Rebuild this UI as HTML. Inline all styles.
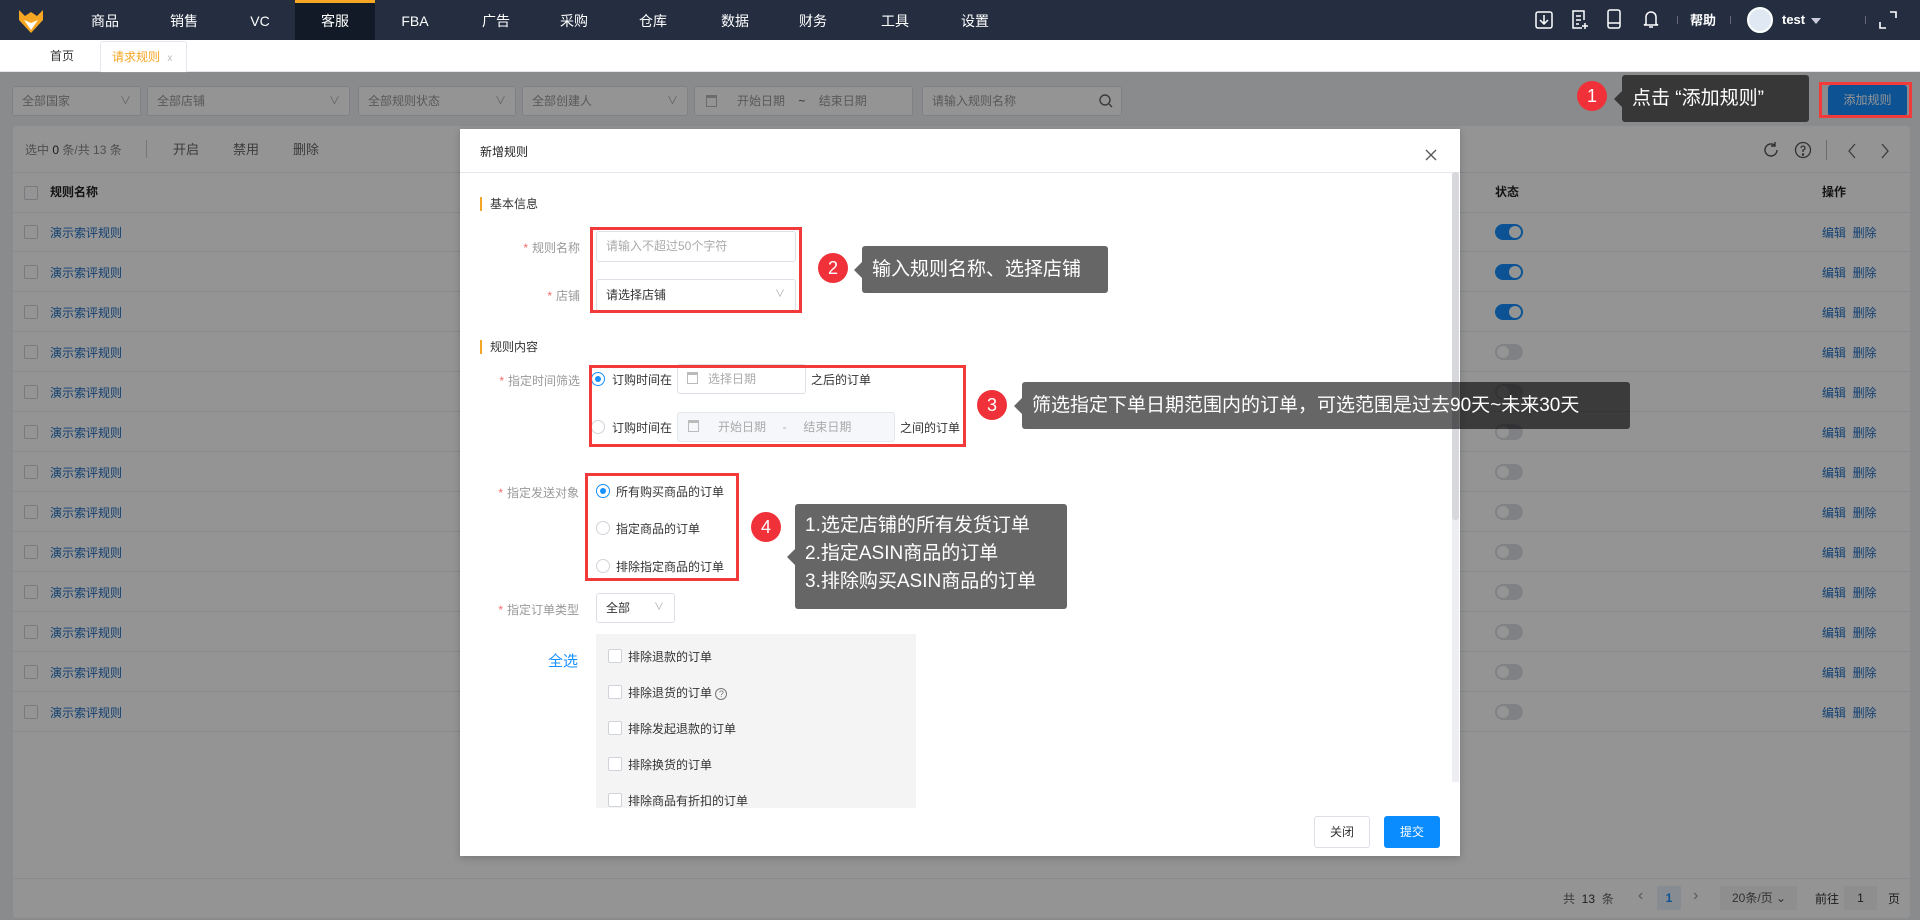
<!DOCTYPE html>
<html><head><meta charset="utf-8">
<style>
*{box-sizing:border-box;margin:0;padding:0}
body{width:1920px;height:920px;overflow:hidden;position:relative;background:#eef0f3;font-family:"Liberation Sans","Noto Sans CJK SC",sans-serif;font-size:12px;color:#333}
.a{position:absolute}
.nav{left:0;top:0;width:1920px;height:40px;background:#242e40}
.nav .m{top:0;height:40px;line-height:42px;color:#fff;font-size:14px;text-align:center;width:80px}
.tabs{left:0;top:40px;width:1920px;height:32px;background:#fff;border-bottom:1px solid #e4e7ed}
.sel{height:30px;top:86px;border:1px solid #dcdfe6;border-radius:3px;background:#fff;color:#999;line-height:28px;padding-left:9px}
.sel .ar{position:absolute;right:9px;top:0;color:#aaa;font-size:11px}
.card{left:13px;top:126px;width:1897px;height:792px;background:#fff;border-radius:4px}
.row{left:13px;width:1897px;height:40px;border-bottom:1px solid #ebeef5}
.cb{width:14px;height:14px;border:1px solid #d0d3d9;border-radius:2px;background:#fff}
.name{color:#1f6fc5}
.tg{width:28px;height:16px;border-radius:8px}
.tg i{position:absolute;top:2px;width:12px;height:12px;border-radius:50%;background:#fff}
.ov{left:0;top:72px;width:1920px;height:848px;background:rgba(0,0,0,.42)}
.modal{left:460px;top:129px;width:1000px;height:727px;background:#fff;box-shadow:0 2px 8px rgba(0,0,0,.2)}
.lbl{color:#999;text-align:right;width:120px;white-space:nowrap}
.lbl b{color:#f56c6c;font-weight:normal;margin-right:4px}
.inp{border:1px solid #dcdfe6;border-radius:3px;background:#fff}
.red{border:3px solid #f23a3a}
.circ{width:30px;height:30px;border-radius:50%;background:#f0313a;color:#fff;font-size:18px;line-height:30px;text-align:center}
.tip{background:rgba(0,0,0,.6);color:#fff;font-size:19px;border-radius:3px;padding:0 10px;white-space:nowrap}
.tip:before{content:"";position:absolute;left:-8px;top:50%;margin-top:-8px;border:8px solid transparent;border-left:0;border-right-color:rgba(0,0,0,.6)}
.rd{width:14px;height:14px;border-radius:50%;border:1px solid #d0d3d9;background:#fff}
.rd.on{border-color:#1890ff}
.rd.on:after{content:"";position:absolute;left:3px;top:3px;width:6px;height:6px;border-radius:50%;background:#1890ff}
.cal{width:11px;height:12px;border:1px solid #bbb;border-top-width:3px}
</style></head><body>

<div class="a nav">
  <svg class="a" style="left:18px;top:8px" width="26" height="26" viewBox="0 0 26 26"><path d="M1 2 L7 8 L13 4 L19 8 L25 2 L25 12 L13 25 L1 12 Z" fill="#f5a623"/><path d="M6 12 L13 22 L20 12 L13 15 Z" fill="#fff"/></svg>
  <div class="a m" style="left:65px">商品</div>
  <div class="a m" style="left:144px">销售</div>
  <div class="a m" style="left:220px">VC</div>
  <div class="a m" style="left:295px;background:#111a26;border-top:3px solid #f5a623;line-height:36px">客服</div>
  <div class="a m" style="left:375px">FBA</div>
  <div class="a m" style="left:456px">广告</div>
  <div class="a m" style="left:534px">采购</div>
  <div class="a m" style="left:613px">仓库</div>
  <div class="a m" style="left:695px">数据</div>
  <div class="a m" style="left:773px">财务</div>
  <div class="a m" style="left:855px">工具</div>
  <div class="a m" style="left:935px">设置</div>
  <svg class="a" style="left:1535px;top:11px" width="18" height="18" viewBox="0 0 18 18" fill="none" stroke="#fff" stroke-width="1.5"><rect x="1" y="1" width="16" height="16" rx="2"/><path d="M9 4v9M5 9l4 4 4-4"/></svg>
  <svg class="a" style="left:1571px;top:10px" width="18" height="20" viewBox="0 0 18 20" fill="none" stroke="#fff" stroke-width="1.5"><path d="M13 10V1H2v17h9"/><path d="M5 6h5M5 10h5M5 14h3M14 13v6M11 16h6"/></svg>
  <svg class="a" style="left:1607px;top:9px" width="14" height="20" viewBox="0 0 14 20" fill="none" stroke="#fff" stroke-width="1.5"><rect x="1" y="1" width="12" height="18" rx="2"/><path d="M1 14h12"/></svg>
  <svg class="a" style="left:1643px;top:9px" width="16" height="20" viewBox="0 0 16 20" fill="none" stroke="#fff" stroke-width="1.5"><path d="M3 15V8a5 5 0 0 1 10 0v7l2 1H1z"/><path d="M6 18h4"/></svg>
  <div class="a" style="left:1677px;top:16px;width:1px;height:8px;background:#667"></div>
  <div class="a" style="left:1690px;top:0;line-height:42px;color:#fff;font-size:13px;font-weight:bold">帮助</div>
  <div class="a" style="left:1730px;top:16px;width:1px;height:8px;background:#667"></div>
  <div class="a" style="left:1747px;top:7px;width:26px;height:26px;border-radius:50%;background:#dfe8f3;border:2px solid #fff"></div>
  <div class="a" style="left:1782px;top:0;line-height:40px;color:#fff;font-size:13px;font-weight:bold">test</div>
  <div class="a" style="left:1811px;top:18px;border:5px solid transparent;border-top:6px solid #ccd;border-bottom:0"></div>
  <div class="a" style="left:1865px;top:16px;width:1px;height:8px;background:#667"></div>
  <svg class="a" style="left:1879px;top:11px" width="18" height="18" viewBox="0 0 18 18" fill="none" stroke="#fff" stroke-width="1.6"><path d="M11 1h6v6M1 11v6h6"/></svg>
</div>

<div class="a tabs">
  <div class="a" style="left:50px;top:0;line-height:32px;font-size:12px;color:#333">首页</div>
  <div class="a" style="left:100px;top:1px;width:87px;height:32px;border:1px solid #e4e7ed;border-bottom:1px solid #fff;border-radius:3px 3px 0 0;background:#fff;line-height:30px;padding-left:11px;color:#f5a623">请求规则 <span style="color:#bbb;font-size:10px;margin-left:4px">x</span></div>
</div>

<div class="a sel" style="left:12px;width:129px">全部国家<span class="ar">∨</span></div>
<div class="a sel" style="left:147px;width:203px">全部店铺<span class="ar">∨</span></div>
<div class="a sel" style="left:358px;width:158px">全部规则状态<span class="ar">∨</span></div>
<div class="a sel" style="left:522px;width:166px">全部创建人<span class="ar">∨</span></div>
<div class="a sel" style="left:694px;width:219px;padding-left:42px">开始日期 <span style="color:#555;margin:0 10px">~</span> 结束日期</div>
<div class="a cal" style="left:706px;top:95px"></div>
<div class="a sel" style="left:922px;width:200px">请输入规则名称
  <svg class="a" style="right:8px;top:7px" width="14" height="14" viewBox="0 0 14 14" fill="none" stroke="#666" stroke-width="1.4"><circle cx="6" cy="6" r="5"/><path d="M10 10l3 3"/></svg></div>
<div class="a" style="left:1828px;top:85px;width:79px;height:31px;background:#1890ff;border-radius:3px;color:#fff;line-height:31px;text-align:center">添加规则</div>

<div class="a card"></div>
<div class="a" style="left:25px;top:140px;line-height:20px;color:#888">选中 <span style="color:#333">0</span> 条/共 13 条</div>
<div class="a" style="left:146px;top:140px;width:1px;height:18px;background:#ccc"></div>
<div class="a" style="left:173px;top:140px;line-height:20px;color:#666;font-size:13px">开启</div>
<div class="a" style="left:233px;top:140px;line-height:20px;color:#666;font-size:13px">禁用</div>
<div class="a" style="left:293px;top:140px;line-height:20px;color:#666;font-size:13px">删除</div>
<svg class="a" style="left:1762px;top:141px" width="18" height="18" viewBox="0 0 18 18" fill="none" stroke="#555" stroke-width="1.4"><path d="M15 9a6 6 0 1 1-2-4.5M13 1v4h-4"/></svg>
<svg class="a" style="left:1794px;top:141px" width="18" height="18" viewBox="0 0 18 18" fill="none" stroke="#555" stroke-width="1.3"><circle cx="9" cy="9" r="7.5"/><path d="M7 7a2 2 0 1 1 2 2v2"/><circle cx="9" cy="13.5" r=".6" fill="#555"/></svg>
<div class="a" style="left:1826px;top:140px;width:1px;height:20px;background:#bbb"></div>
<svg class="a" style="left:1847px;top:143px" width="10" height="16" viewBox="0 0 10 16" fill="none" stroke="#666" stroke-width="1.3"><path d="M8 1L2 8l6 7"/></svg>
<svg class="a" style="left:1880px;top:143px" width="10" height="16" viewBox="0 0 10 16" fill="none" stroke="#666" stroke-width="1.3"><path d="M2 1l6 7-6 7"/></svg>
<div class="a row" style="top:172px;border-top:1px solid #ebeef5;height:41px"></div>
<div class="a cb" style="left:24px;top:186px"></div>
<div class="a" style="left:50px;top:183px;font-weight:bold;color:#222">规则名称</div>
<div class="a" style="left:1495px;top:183px;font-weight:bold;color:#222">状态</div>
<div class="a" style="left:1822px;top:183px;font-weight:bold;color:#222">操作</div>

<div id="rows"></div>
<script>
var h='';for(var i=0;i<13;i++){var t=212+i*40;var on=i<3;
h+='<div class="a row" style="top:'+t+'px"></div><div class="a cb" style="left:24px;top:'+(t+13)+'px"></div><div class="a name" style="left:50px;top:'+(t+12)+'px">演示索评规则</div>'+
'<div class="a tg" style="left:1495px;top:'+(t+12)+'px;background:'+(on?'#1890ff':'#dcdfe6')+'"><i style="left:'+(on?14:2)+'px"></i></div>'+
'<div class="a name" style="left:1822px;top:'+(t+12)+'px">编辑&nbsp;&nbsp;删除</div>';}
document.getElementById('rows').outerHTML=h;
</script>
<div class="a" style="left:13px;top:878px;width:1897px;height:1px;background:#ebeef5"></div>
<div class="a" style="left:1563px;top:890px;line-height:18px;color:#666">共 <span style="color:#333">&nbsp;13&nbsp;</span> 条</div>
<div class="a" style="left:1638px;top:887px;color:#999;font-size:16px">‹</div>
<div class="a" style="left:1657px;top:886px;width:24px;height:24px;background:#e8f2fd;color:#1890ff;text-align:center;line-height:24px;font-weight:bold">1</div>
<div class="a" style="left:1693px;top:887px;color:#999;font-size:16px">›</div>
<div class="a" style="left:1720px;top:886px;width:77px;height:24px;background:#f4f4f5;line-height:24px;padding-left:12px;color:#555">20条/页 ⌄</div>
<div class="a" style="left:1815px;top:890px;color:#333">前往</div>
<div class="a" style="left:1844px;top:886px;width:33px;height:24px;background:#f4f4f5;line-height:24px;text-align:center">1</div>
<div class="a" style="left:1888px;top:890px;color:#333">页</div>

<div class="a ov"></div>

<div class="a" style="left:1819px;top:82px;width:93px;height:36px;border:3px solid #f23a3a"></div>
<div class="a circ" style="left:1577px;top:81px">1</div>
<div class="a tip" style="left:1622px;top:75px;width:187px;height:47px;line-height:47px">点击 “添加规则”</div>

<div class="a modal">
  <div class="a" style="left:20px;top:14px;font-size:12px;color:#222">新增规则</div>
  <svg class="a" style="left:965px;top:20px" width="12" height="12" viewBox="0 0 12 12" stroke="#555" stroke-width="1.3"><path d="M1 1l10 10M11 1L1 11"/></svg>
  <div class="a" style="left:0;top:43px;width:1000px;height:1px;background:#e4e7ed"></div>
  <div class="a" style="left:992px;top:43px;width:7px;height:610px;background:#eceef2"></div>
  <div class="a" style="left:992px;top:43px;width:7px;height:348px;background:#d6d8dc;border-radius:3px"></div>

  <div class="a" style="left:20px;top:68px;width:2px;height:14px;background:#f5a623"></div>
  <div class="a" style="left:30px;top:66px;font-size:12px;color:#333">基本信息</div>
  <div class="a lbl" style="left:0;top:110px"><b>*</b>规则名称</div>
  <div class="a inp" style="left:136px;top:102px;width:200px;height:31px;padding-left:9px;line-height:29px;color:#aaa">请输入不超过50个字符</div>
  <div class="a lbl" style="left:0;top:158px"><b>*</b>店铺</div>
  <div class="a inp" style="left:136px;top:150px;width:200px;height:32px;padding-left:9px;line-height:30px;color:#333">请选择店铺<span class="a" style="right:10px;top:0;color:#aaa;font-size:10px">∨</span></div>

  <div class="a" style="left:20px;top:211px;width:2px;height:14px;background:#f5a623"></div>
  <div class="a" style="left:30px;top:209px;font-size:12px;color:#333">规则内容</div>
  <div class="a lbl" style="left:0;top:243px"><b>*</b>指定时间筛选</div>
  <div class="a rd on" style="left:131px;top:243px"></div>
  <div class="a" style="left:152px;top:242px">订购时间在</div>
  <div class="a inp" style="left:217px;top:235px;width:129px;height:30px;padding-left:30px;line-height:28px;color:#aaa">选择日期</div>
  <div class="a cal" style="left:227px;top:243px"></div>
  <div class="a" style="left:351px;top:242px">之后的订单</div>
  <div class="a rd" style="left:131px;top:291px"></div>
  <div class="a" style="left:152px;top:290px">订购时间在</div>
  <div class="a inp" style="left:217px;top:283px;width:218px;height:30px;padding-left:40px;line-height:28px;color:#aaa;background:#f5f7fa;border-color:#e4e7ed">开始日期 &nbsp;&nbsp;&nbsp; - &nbsp;&nbsp;&nbsp; 结束日期</div>
  <div class="a cal" style="left:228px;top:291px"></div>
  <div class="a" style="left:440px;top:290px">之间的订单</div>

  <div class="a lbl" style="left:-1px;top:355px"><b>*</b>指定发送对象</div>
  <div class="a rd on" style="left:136px;top:355px"></div>
  <div class="a" style="left:156px;top:354px">所有购买商品的订单</div>
  <div class="a rd" style="left:136px;top:392px"></div>
  <div class="a" style="left:156px;top:391px">指定商品的订单</div>
  <div class="a rd" style="left:136px;top:430px"></div>
  <div class="a" style="left:156px;top:429px">排除指定商品的订单</div>

  <div class="a lbl" style="left:-1px;top:472px"><b>*</b>指定订单类型</div>
  <div class="a inp" style="left:136px;top:464px;width:79px;height:30px;padding-left:9px;line-height:28px">全部<span class="a" style="right:10px;top:0;color:#aaa;font-size:10px">∨</span></div>

  <div class="a" style="left:136px;top:505px;width:320px;height:174px;background:#f4f4f5;overflow:hidden">
    <div class="a cb" style="left:12px;top:15px"></div><div class="a" style="left:32px;top:14px">排除退款的订单</div>
    <div class="a cb" style="left:12px;top:51px"></div><div class="a" style="left:32px;top:50px">排除退货的订单 <span style="display:inline-block;width:12px;height:12px;border:1px solid #777;border-radius:50%;font-size:9px;line-height:10px;text-align:center;color:#777">?</span></div>
    <div class="a cb" style="left:12px;top:87px"></div><div class="a" style="left:32px;top:86px">排除发起退款的订单</div>
    <div class="a cb" style="left:12px;top:123px"></div><div class="a" style="left:32px;top:122px">排除换货的订单</div>
    <div class="a cb" style="left:12px;top:159px"></div><div class="a" style="left:32px;top:158px">排除商品有折扣的订单</div>
  </div>
  <div class="a" style="left:88px;top:521px;font-size:15px;color:#1890ff">全选</div>

  <div class="a" style="left:854px;top:687px;width:56px;height:32px;border:1px solid #dcdfe6;border-radius:3px;text-align:center;line-height:30px">关闭</div>
  <div class="a" style="left:924px;top:687px;width:56px;height:32px;background:#0a8cff;border-radius:3px;text-align:center;line-height:32px;color:#fff">提交</div>
</div>

<div class="a red" style="left:590px;top:227px;width:212px;height:86px"></div>
<div class="a circ" style="left:818px;top:253px">2</div>
<div class="a tip" style="left:862px;top:246px;width:246px;height:47px;line-height:47px">输入规则名称、选择店铺</div>

<div class="a red" style="left:589px;top:365px;width:377px;height:82px"></div>
<div class="a circ" style="left:977px;top:390px">3</div>
<div class="a tip" style="left:1022px;top:382px;width:608px;height:47px;line-height:47px">筛选指定下单日期范围内的订单，可选范围是过去90天~未来30天</div>

<div class="a red" style="left:585px;top:473px;width:154px;height:108px"></div>
<div class="a circ" style="left:751px;top:512px">4</div>
<div class="a tip" style="left:795px;top:504px;width:272px;height:105px;padding-top:8px;line-height:28px">1.选定店铺的所有发货订单<br>2.指定ASIN商品的订单<br>3.排除购买ASIN商品的订单</div>

</body></html>
